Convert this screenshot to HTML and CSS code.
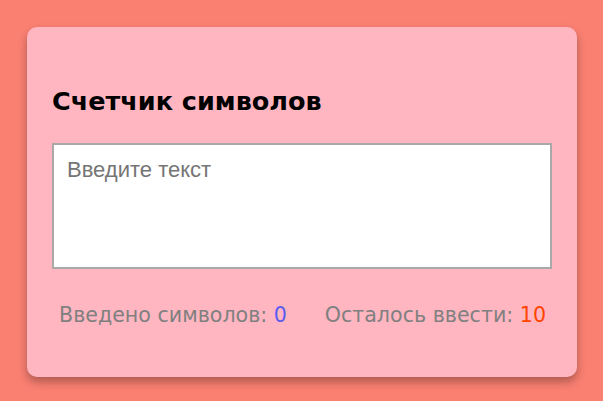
FILE: index.html
```html
<!DOCTYPE html>
<html lang="ru">
<head>
<meta charset="utf-8">
<title>Счетчик символов</title>
<link rel="stylesheet" href="styles.css">
</head>
<body>
<div class="card">
  <h2 class="title">Счетчик символов</h2>
  <textarea class="input" placeholder="Введите текст"></textarea>
  <div class="stats">
    <span class="stat">Введено символов: <span class="typed">0</span></span>
    <span class="stat">Осталось ввести: <span class="left">10</span></span>
  </div>
</div>
</body>
</html>
```
FILE: styles.css
```css
html, body {
  margin: 0;
  padding: 0;
}
body {
  background: #fa8072;
  width: 603px;
  height: 401px;
  padding: 27px;
  box-sizing: border-box;
  font-family: "Comic Sans MS", "DejaVu Sans", sans-serif;
}
.card {
  width: 550px;
  height: 350px;
  box-sizing: border-box;
  background: #ffb6c1;
  border-radius: 10px;
  box-shadow: 0 5px 10px rgba(0, 0, 0, 0.3);
  padding: 52px 25px 25px;
}
.title {
  margin: 0 0 20px;
  font-size: 25.5px;
  font-weight: bold;
  color: #000;
  line-height: 44px;
}
.input {
  display: block;
  width: 500px;
  height: 126px;
  box-sizing: border-box;
  border: 2px solid #a9a9a9;
  padding: 12px 13px 10px;
  font-family: "Liberation Sans", Arial, sans-serif;
  font-size: 22px;
  resize: none;
  background: #fff;
  outline: none;
}
.input::placeholder {
  color: #757575;
}
.stats {
  display: flex;
  justify-content: space-between;
  margin-top: 34px;
  padding: 0 6px 0 7px;
  font-size: 20.6px;
  color: #808080;
}
.typed {
  color: #5b5bf0;
}
.left {
  color: #ff4500;
}
```
